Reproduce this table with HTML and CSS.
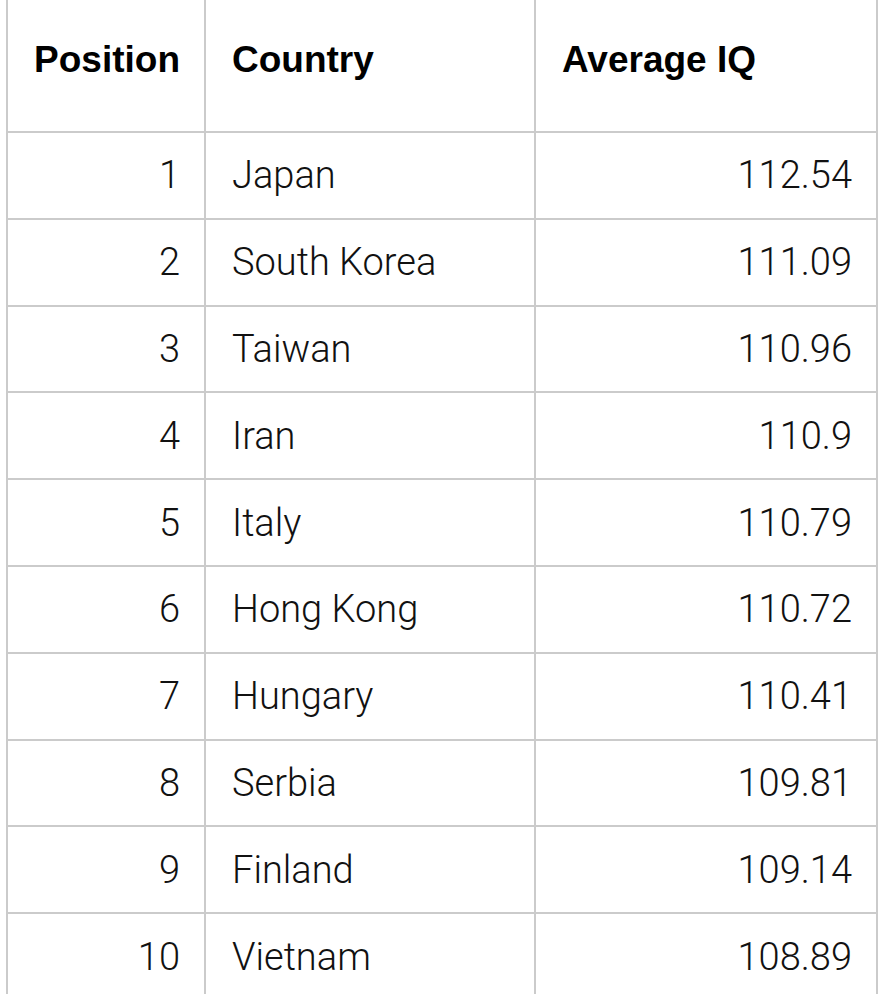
FILE: index.html
```html
<!DOCTYPE html>
<html>
<head>
<meta charset="utf-8">
<link rel="stylesheet" href="styles.css">
</head>
<body>
<table class="iq-table">
  <thead>
    <tr>
      <th class="col-pos">Position</th>
      <th class="col-country">Country</th>
      <th class="col-iq">Average IQ</th>
    </tr>
  </thead>
  <tbody>
    <tr><td class="num">1</td><td>Japan</td><td class="num">112.54</td></tr>
    <tr><td class="num">2</td><td>South Korea</td><td class="num">111.09</td></tr>
    <tr><td class="num">3</td><td>Taiwan</td><td class="num">110.96</td></tr>
    <tr><td class="num">4</td><td>Iran</td><td class="num">110.9</td></tr>
    <tr><td class="num">5</td><td>Italy</td><td class="num">110.79</td></tr>
    <tr><td class="num">6</td><td>Hong Kong</td><td class="num">110.72</td></tr>
    <tr><td class="num">7</td><td>Hungary</td><td class="num">110.41</td></tr>
    <tr><td class="num">8</td><td>Serbia</td><td class="num">109.81</td></tr>
    <tr><td class="num">9</td><td>Finland</td><td class="num">109.14</td></tr>
    <tr><td class="num">10</td><td>Vietnam</td><td class="num">108.89</td></tr>
  </tbody>
</table>
</body>
</html>
```
FILE: styles.css
```css
html, body {
  margin: 0;
  padding: 0;
  background: #fff;
  overflow: hidden;
}
body {
  padding-left: 6px;
}
.iq-table {
  border-collapse: collapse;
  margin-top: -2px;
  width: 872px;
  table-layout: fixed;
  font-family: Roboto, "Liberation Sans", sans-serif;
  color: #111;
}
.iq-table th,
.iq-table td {
  border: 2px solid #cbcbcb;
  padding: 0 24px 0 26px;
}
.iq-table th {
  height: 120px;
  padding-bottom: 11px;
  font-family: "Liberation Sans", Arial, sans-serif;
  font-weight: bold;
  font-size: 37px;
  color: #000;
  text-align: left;
  vertical-align: middle;
}
.col-pos { width: 162px; }
.col-country { width: 278px; }
.iq-table th.col-pos { text-align: right; padding-right: 24px; padding-left: 10px; }
.iq-table td {
  height: 84.8px;
  font-size: 38px;
  font-weight: 300;
  vertical-align: middle;
  line-height: 1;
}
.iq-table td.num { text-align: right; }
```
